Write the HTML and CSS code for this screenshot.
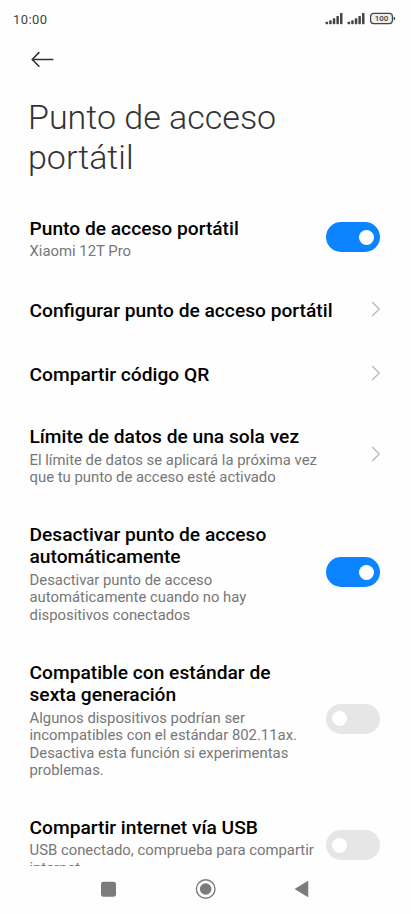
FILE: index.html
```html
<!DOCTYPE html>
<html lang="es">

<head>
    <title>Punto de acceso portátil</title>
    <meta charset="utf-8" />
    <meta name="viewport" content="width=device-width,initial-scale=1" />
    <link rel="stylesheet" href="styles.css">
</head>

<body>
    <div class="screen">
        <div class="statusBar">
            <span class="time">10:00</span>
            <svg class="statusIcons" width="72" height="14" viewBox="0 0 72 14">
                <g fill="#444">
                    <rect x="0.6" y="9.7" width="2.5" height="2.5" rx="0.6" />
                    <rect x="4.2" y="8.3" width="2.5" height="3.9" rx="0.6" />
                    <rect x="7.8" y="6.3" width="2.5" height="5.9" rx="0.6" />
                    <rect x="11.4" y="4" width="2.5" height="8.2" rx="0.6" />
                    <rect x="15" y="1" width="2.5" height="11.2" rx="0.6" />
                    <rect x="22.6" y="9.7" width="2.5" height="2.5" rx="0.6" />
                    <rect x="26.2" y="8.3" width="2.5" height="3.9" rx="0.6" />
                    <rect x="29.8" y="6.3" width="2.5" height="5.9" rx="0.6" />
                    <rect x="33.4" y="4" width="2.5" height="8.2" rx="0.6" />
                    <rect x="37" y="1" width="2.5" height="11.2" rx="0.6" />
                    <path d="M68.6 4.4 Q70.2 4.8 70.2 6.5 Q70.2 8.2 68.6 8.6z" />
                </g>
                <rect x="45.6" y="1.4" width="21.8" height="10.2" rx="3" fill="#eee" stroke="#444" stroke-width="1.2" />
                <text class="battery" x="56.6" y="9.4" text-anchor="middle">100</text>
            </svg>
        </div>

        <div class="toolbar">
            <svg width="24" height="18" viewBox="0 0 24 18" fill="none" stroke="#333" stroke-width="1.6" stroke-linecap="round" stroke-linejoin="round">
                <path d="M22.8 9.5H2.4M8.9 2.6L2.2 9.5L8.9 16.2" />
            </svg>
        </div>

        <h1 class="heading">Punto de acceso portátil</h1>

        <div class="list">
            <div class="row">
                <div class="text">
                    <div class="title">Punto de acceso portátil</div>
                    <div class="desc">Xiaomi 12T Pro</div>
                </div>
                <div class="toggle on"></div>
            </div>
            <div class="row">
                <div class="text">
                    <div class="title">Configurar punto de acceso portátil</div>
                </div>
                <svg class="chevron" viewBox="0 0 10 16"><path d="M1.2 1L8.2 8L1.2 15" /></svg>
            </div>
            <div class="row">
                <div class="text">
                    <div class="title">Compartir código QR</div>
                </div>
                <svg class="chevron" viewBox="0 0 10 16"><path d="M1.2 1L8.2 8L1.2 15" /></svg>
            </div>
            <div class="row">
                <div class="text">
                    <div class="title">Límite de datos de una sola vez</div>
                    <div class="desc">El límite de datos se aplicará la próxima vez que tu punto de acceso esté activado</div>
                </div>
                <svg class="chevron" viewBox="0 0 10 16"><path d="M1.2 1L8.2 8L1.2 15" /></svg>
            </div>
            <div class="row">
                <div class="text">
                    <div class="title">Desactivar punto de acceso automáticamente</div>
                    <div class="desc">Desactivar punto de acceso automáticamente cuando no hay dispositivos conectados</div>
                </div>
                <div class="toggle on"></div>
            </div>
            <div class="row">
                <div class="text">
                    <div class="title">Compatible con estándar de sexta generación</div>
                    <div class="desc">Algunos dispositivos podrían ser incompatibles con el estándar 802.11ax. Desactiva esta función si experimentas problemas.</div>
                </div>
                <div class="toggle"></div>
            </div>
            <div class="row">
                <div class="text">
                    <div class="title">Compartir internet vía USB</div>
                    <div class="desc">USB conectado, comprueba para compartir internet</div>
                </div>
                <div class="toggle"></div>
            </div>
        </div>

        <div class="navBar">
            <svg width="22" height="22" viewBox="0 0 22 22"><rect x="4" y="3.8" width="15" height="15" rx="2.4" fill="#7b7b7b" /></svg>
            <svg width="22" height="22" viewBox="0 0 22 22">
                <circle cx="10.7" cy="11" r="9.3" fill="none" stroke="#7b7b7b" stroke-width="1.4" />
                <circle cx="10.7" cy="11" r="5.8" fill="#7b7b7b" />
            </svg>
            <svg width="22" height="22" viewBox="0 0 22 22"><path d="M3.4 11L15.8 3.4V18.6z" fill="#7b7b7b" stroke="#7b7b7b" stroke-width="1" stroke-linejoin="round" /></svg>
        </div>
    </div>
</body>

</html>
```

FILE: styles.css
```css
body {
    margin: 0;
    background-color: #fefefe;
    font-family: Roboto, "Liberation Sans", sans-serif;
}

.screen {
    display: flex;
    flex-direction: column;
    width: 411px;
    height: 914px;
    overflow: hidden;
}

.statusBar {
    display: flex;
    justify-content: space-between;
    align-items: center;
    height: 38px;
    padding: 0 15px 0 13px;
    flex: none;
}

.time {
    font-size: 13px;
    letter-spacing: 0.4px;
    color: #444;
}

.statusIcons {
    display: block;
    margin-right: -1px;
}

.battery {
    font-size: 8px;
    font-weight: 500;
    fill: #444;
}

.toolbar {
    height: 59px;
    padding: 12px 0 0 30px;
    box-sizing: border-box;
    flex: none;
}

.toolbar svg {
    display: block;
}

.heading {
    margin: 0;
    padding: 0 100px 0 28px;
    font-size: 34px;
    font-weight: 300;
    line-height: 40px;
    color: #333;
    flex: none;
}

.list {
    flex: 1;
    min-height: 0;
    margin-top: 20.2px;
    padding: 0 31px 0 29.5px;
    overflow: hidden;
}

.row {
    display: flex;
    justify-content: space-between;
    align-items: center;
    min-height: 64px;
    padding: 16.75px 0;
    box-sizing: border-box;
}

.text {
    flex: 1;
    padding-top: 3.8px;
    margin-right: 10px;
}

.title {
    font-size: 19.2px;
    font-weight: 500;
    line-height: 22.5px;
    color: #000;
}

.desc {
    max-width: 290px;
    margin-top: 3px;
    font-size: 14.87px;
    line-height: 17.5px;
    color: #777;
}

.toggle {
    width: 54px;
    height: 30px;
    padding: 7.5px 6px;
    box-sizing: border-box;
    border-radius: 15px;
    background-color: #e6e6e6;
    flex: none;
}

.toggle::after {
    content: "";
    display: block;
    width: 15px;
    height: 15px;
    border-radius: 50%;
    background-color: #fff;
}

.toggle.on {
    background-color: #0d84ff;
}

.toggle.on::after {
    margin-left: auto;
}

.chevron {
    width: 10px;
    height: 16px;
    margin-right: -1px;
    flex: none;
}

.chevron path {
    fill: none;
    stroke: #b8b8b8;
    stroke-width: 1.3;
}

.navBar {
    display: flex;
    justify-content: space-between;
    height: 48px;
    padding: 12px 97px;
    box-sizing: border-box;
    flex: none;
}
```
